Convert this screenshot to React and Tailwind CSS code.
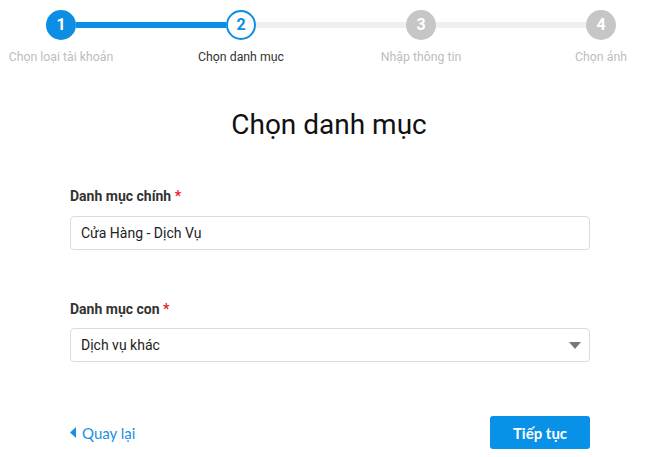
import React from "react";

const steps = [
  { n: 1, label: "Chọn loại tài khoản", state: "done" },
  { n: 2, label: "Chọn danh mục", state: "active" },
  { n: 3, label: "Nhập thông tin", state: "todo" },
  { n: 4, label: "Chọn ảnh", state: "todo" },
];

function Step({ step }) {
  let circle = "bg-[#c6c6c6] text-white";
  let text = "text-[#bdbdbd]";
  if (step.state === "done") {
    circle = "bg-[#0b8ee3] text-white";
  }
  if (step.state === "active") {
    circle = "bg-white text-[#0b8ee3] border-2 border-[#0b8ee3]";
    text = "text-[#333]";
  }
  return (
    <div className="flex flex-col items-center w-[30px] shrink-0">
      <div className={`w-[30px] h-[30px] rounded-full flex items-center justify-center font-bold text-[16px] ${circle}`}>
        {step.n}
      </div>
      <div className={`mt-[8px] whitespace-nowrap text-[12.3px] ${text}`}>{step.label}</div>
    </div>
  );
}

function Stepper() {
  return (
    <div className="flex w-[570px] ml-[46px] pt-[10px]">
      {steps.map((s, i) => (
        <React.Fragment key={s.n}>
          <Step step={s} />
          {i < steps.length - 1 && (
            <div className={`flex-1 h-[6px] mt-[12px] ${i === 0 ? "bg-[#0b8ee3]" : "bg-[#efefef]"}`} />
          )}
        </React.Fragment>
      ))}
    </div>
  );
}

export default function App() {
  return (
    <div className="w-[649px] h-[457px] bg-white overflow-hidden" style={{ fontFamily: "Roboto, 'Noto Sans', sans-serif" }}>
      <Stepper />

      <h1 className="text-center text-[28px] text-[#111] mt-[42px] ml-[9px] leading-[34px]">Chọn danh mục</h1>

      <div className="ml-[70px] w-[520px] mt-[44px]">
        <label className="block text-[14px] font-bold text-[#333]">
          Danh mục chính <span className="text-[#e8232d]">*</span>
        </label>
        <div className="mt-[9px] h-[34px] border border-[#dcdcdc] rounded-[4px] px-[10px] flex items-center text-[14px] text-[#222]">
          Cửa Hàng - Dịch Vụ
        </div>

        <label className="block text-[14px] font-bold text-[#333] mt-[49px]">
          Danh mục con <span className="text-[#e8232d]">*</span>
        </label>
        <div className="mt-[8px] h-[34px] border border-[#dcdcdc] rounded-[4px] pl-[10px] pr-[8px] flex items-center justify-between text-[14px] text-[#222]">
          <span>Dịch vụ khác</span>
          <svg width="12" height="7" viewBox="0 0 12 7">
            <path d="M0 0 L12 0 L6 7 Z" fill="#777" />
          </svg>
        </div>

        <div className="mt-[54px] flex items-center justify-between" style={{ fontFamily: "Lato, 'Open Sans', sans-serif" }}>
          <a className="flex items-center gap-[6px] text-[#1a8fe3] text-[15px]">
            <svg width="6" height="11" viewBox="0 0 6 11">
              <path d="M6 0 L0 5.5 L6 11 Z" fill="#1a8fe3" />
            </svg>
            Quay lại
          </a>
          <button className="w-[100px] h-[33px] bg-[#0891e6] rounded-[3px] text-white text-[15px] font-bold">
            Tiếp tục
          </button>
        </div>
      </div>
    </div>
  );
}
